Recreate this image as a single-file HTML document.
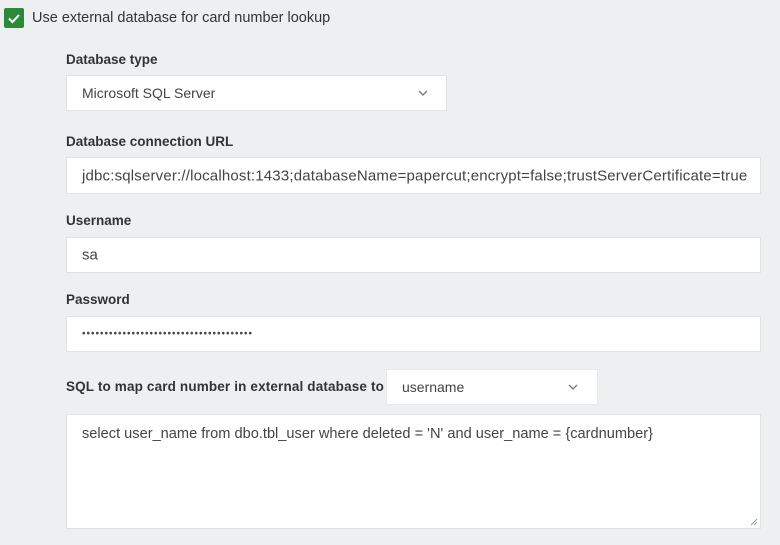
<!DOCTYPE html>
<html><head><style>
body{margin:0;width:780px;height:545px;background:#eeeff1;font-family:"Liberation Sans",sans-serif;position:relative;overflow:hidden;color:#333}
.a{position:absolute}
.lbl{font-weight:bold;font-size:13.5px;color:#333;letter-spacing:0}
.box{background:#fff;border:1px solid #e1e2e5;box-sizing:border-box}
.t{font-size:14px;color:#444;position:absolute;left:15px;top:50%;transform:translateY(-50%);white-space:nowrap}
.chev{position:absolute;top:50%;margin-top:-6px}
</style></head><body>
<div class="a" style="left:4px;top:8px;width:20px;height:20px;background:#2b8a3a;border-radius:2px">
<svg width="20" height="20"><path d="M5 10.5l3.5 3.5 6.5-7" stroke="#fff" stroke-width="2" fill="none"/></svg></div>
<div class="a" style="left:32px;top:10px;font-size:14.5px;color:#333">Use external database for card number lookup</div>

<div class="a lbl" style="left:66px;top:52px">Database type</div>
<div class="a box" style="left:66px;top:75px;width:381px;height:36px"><span class="t">Microsoft SQL Server</span>
<svg class="chev" style="left:350px" width="12" height="12"><path d="M2 4l4 4 4-4" stroke="#777" stroke-width="1.3" fill="none"/></svg></div>

<div class="a lbl" style="left:66px;top:134px">Database connection URL</div>
<div class="a box" style="left:66px;top:157px;width:695px;height:37px"><span class="t" style="font-size:15px;letter-spacing:0.18px">jdbc:sqlserver://localhost:1433;databaseName=papercut;encrypt=false;trustServerCertificate=true</span></div>

<div class="a lbl" style="left:66px;top:213px">Username</div>
<div class="a box" style="left:66px;top:237px;width:695px;height:36px"><span class="t" style="font-size:15px">sa</span></div>

<div class="a lbl" style="left:66px;top:292px">Password</div>
<div class="a box" style="left:66px;top:316px;width:695px;height:36px"><span class="t" style="font-size:10px;letter-spacing:1.0px">••••••••••••••••••••••••••••••••••••••</span></div>

<div class="a lbl" style="left:66px;top:379px;letter-spacing:0.15px">SQL to map card number in external database to</div>
<div class="a box" style="left:386px;top:369px;width:212px;height:36px;border-color:#e8e9eb"><span class="t">username</span>
<svg class="chev" style="left:180px" width="12" height="12"><path d="M2 4l4 4 4-4" stroke="#777" stroke-width="1.3" fill="none"/></svg></div>

<div class="a box" style="left:66px;top:414px;width:695px;height:115px">
<span class="a" style="left:15px;top:11px;font-size:14.6px;color:#444;white-space:nowrap">select user_name from dbo.tbl_user where deleted = 'N' and user_name = {cardnumber}</span>
<svg class="a" style="right:2px;bottom:2px" width="8" height="8"><path d="M7 1L1 7M7 4L4 7" stroke="#999" stroke-width="1"/></svg></div>
</body></html>
